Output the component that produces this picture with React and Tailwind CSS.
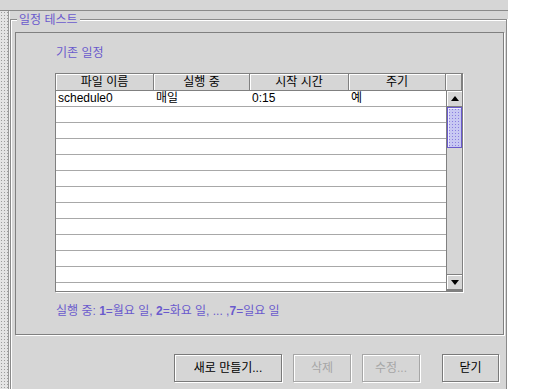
import React from "react";

const F = { fontFamily: '"Liberation Sans", "Noto Sans CJK KR", sans-serif' };

function Btn({ children, w, disabled, className = "" }) {
  return (
    <div
      className={
        "h-[28px] flex items-center justify-center text-[12px] border shadow-[inset_1px_1px_0_#fff,1px_1px_0_#fff] " +
        (disabled ? "border-[#a6a6a6] text-[#a6a6a6] " : "border-[#7a7a7a] text-black ") +
        w +
        " " +
        className
      }
    >
      {children}
    </div>
  );
}

function HeaderCell({ children, w }) {
  return (
    <div
      className={
        "h-full flex items-center justify-center border-r border-b border-[#808080] shadow-[inset_1px_1px_0_#fff] bg-[#d6d6d6] text-[12px] text-black " +
        w
      }
    >
      {children}
    </div>
  );
}

function Row({ cells }) {
  return (
    <div className="h-[16px] flex border-b border-[#a8a8a8] bg-white text-[12px] leading-[15px] text-black">
      <div className="w-[98px] pl-[2px]">{cells[0]}</div>
      <div className="w-[96px] pl-[2px]">{cells[1]}</div>
      <div className="w-[99px] pl-[2px]">{cells[2]}</div>
      <div className="w-[97px] pl-[2px]">{cells[3]}</div>
    </div>
  );
}

export default function App() {
  const rows = [["schedule0", "매일", "0:15", "예"]];
  for (let i = 0; i < 11; i++) rows.push(["", "", "", ""]);
  return (
    <div className="w-[533px] h-[389px] bg-white flex overflow-hidden" style={F}>
      <div className="w-[508px] h-full bg-[#d6d6d6] flex flex-col">
        <div className="h-[10px] shrink-0" />
        <div className="h-[1px] shrink-0 bg-[#8a8a8a]" />
        <div className="flex flex-1 min-h-0">
          <div className="w-[8px] h-full bg-[#e4e4e4] bg-[radial-gradient(circle,#9c9c9c_0.9px,transparent_1px)] bg-[length:3px_3px]" />
          <div className="w-[1px] h-full bg-[#9a9a9a]" />
          <div className="w-[1px] h-full bg-[#f0f0f0]" />
          {/* titled border box */}
          <div className="relative mt-[8px] w-[497px] h-[400px] border-l border-t border-r border-[#8a8a8a] shadow-[inset_1px_1px_0_#fff,1px_0_0_#fff] pl-[4px] pt-[12px] flex flex-col">
            <span className="absolute left-[6px] -top-[8px] px-[2px] bg-[#d6d6d6] text-[12px] leading-[16px] text-[#6a5acd]">
              일정 테스트
            </span>
            {/* inner panel */}
            <div className="w-[489px] h-[303px] border border-[#808080] shadow-[1px_1px_0_#fff] flex flex-col pl-[39px]">
              <div className="mt-[12px] ml-[1px] h-[16px] text-[12px] leading-[16px] text-[#6a5acd]">기존 일정</div>
              <div className="mt-[12px] w-[408px] h-[219px] border border-[#808080] shadow-[1px_1px_0_#fff] flex flex-col">
                <div className="h-[17px] flex shrink-0">
                  <HeaderCell w="w-[98px]">파일 이름</HeaderCell>
                  <HeaderCell w="w-[96px]">실행 중</HeaderCell>
                  <HeaderCell w="w-[99px]">시작 시간</HeaderCell>
                  <HeaderCell w="w-[97px]">주기</HeaderCell>
                  <HeaderCell w="w-[16px]"></HeaderCell>
                </div>
                <div className="flex flex-1 min-h-0">
                  <div className="w-[390px] bg-white flex flex-col">
                    {rows.map((r, i) => (
                      <Row key={i} cells={r} />
                    ))}
                  </div>
                  <div className="w-[16px] h-full bg-[#d6d6d6] border-l border-[#808080] flex flex-col">
                    <div className="h-[16px] border-b border-[#808080] shadow-[inset_1px_1px_0_#fff] flex items-center justify-center">
                      <svg width="8" height="5" viewBox="0 0 8 5">
                        <path d="M4 0 L8 5 L0 5 Z" fill="#000" />
                      </svg>
                    </div>
                    <div className="h-[41px] border border-[#6a5acd] bg-[#c8c8f2] bg-[radial-gradient(circle,#8a7ee0_0.8px,transparent_1px)] bg-[length:3px_3px] shadow-[inset_1px_1px_0_#eeeeff]" />
                    <div className="flex-1" />
                    <div className="h-[17px] border-t border-b-2 border-[#808080] shadow-[inset_1px_1px_0_#fff] flex items-center justify-center">
                      <svg width="8" height="5" viewBox="0 0 8 5">
                        <path d="M0 0 L8 0 L4 5 Z" fill="#000" />
                      </svg>
                    </div>
                  </div>
                </div>
              </div>
              <div className="mt-[11px] ml-[1px] h-[16px] text-[12px] leading-[16px] text-[#6a5acd]">
                실행 중: <b>1</b>=월요 일, <b>2</b>=화요 일, ... ,<b>7</b>=일요 일
              </div>
            </div>
            {/* buttons */}
            <div className="mt-[19px] flex pl-[159px]">
              <Btn w="w-[108px]">새로 만들기...</Btn>
              <Btn w="w-[58px]" disabled className="ml-[11px]">삭제</Btn>
              <Btn w="w-[58px]" disabled className="ml-[11px]">수정...</Btn>
              <Btn w="w-[57px]" className="ml-[22px]">닫기</Btn>
            </div>
          </div>
        </div>
      </div>
    </div>
  );
}
